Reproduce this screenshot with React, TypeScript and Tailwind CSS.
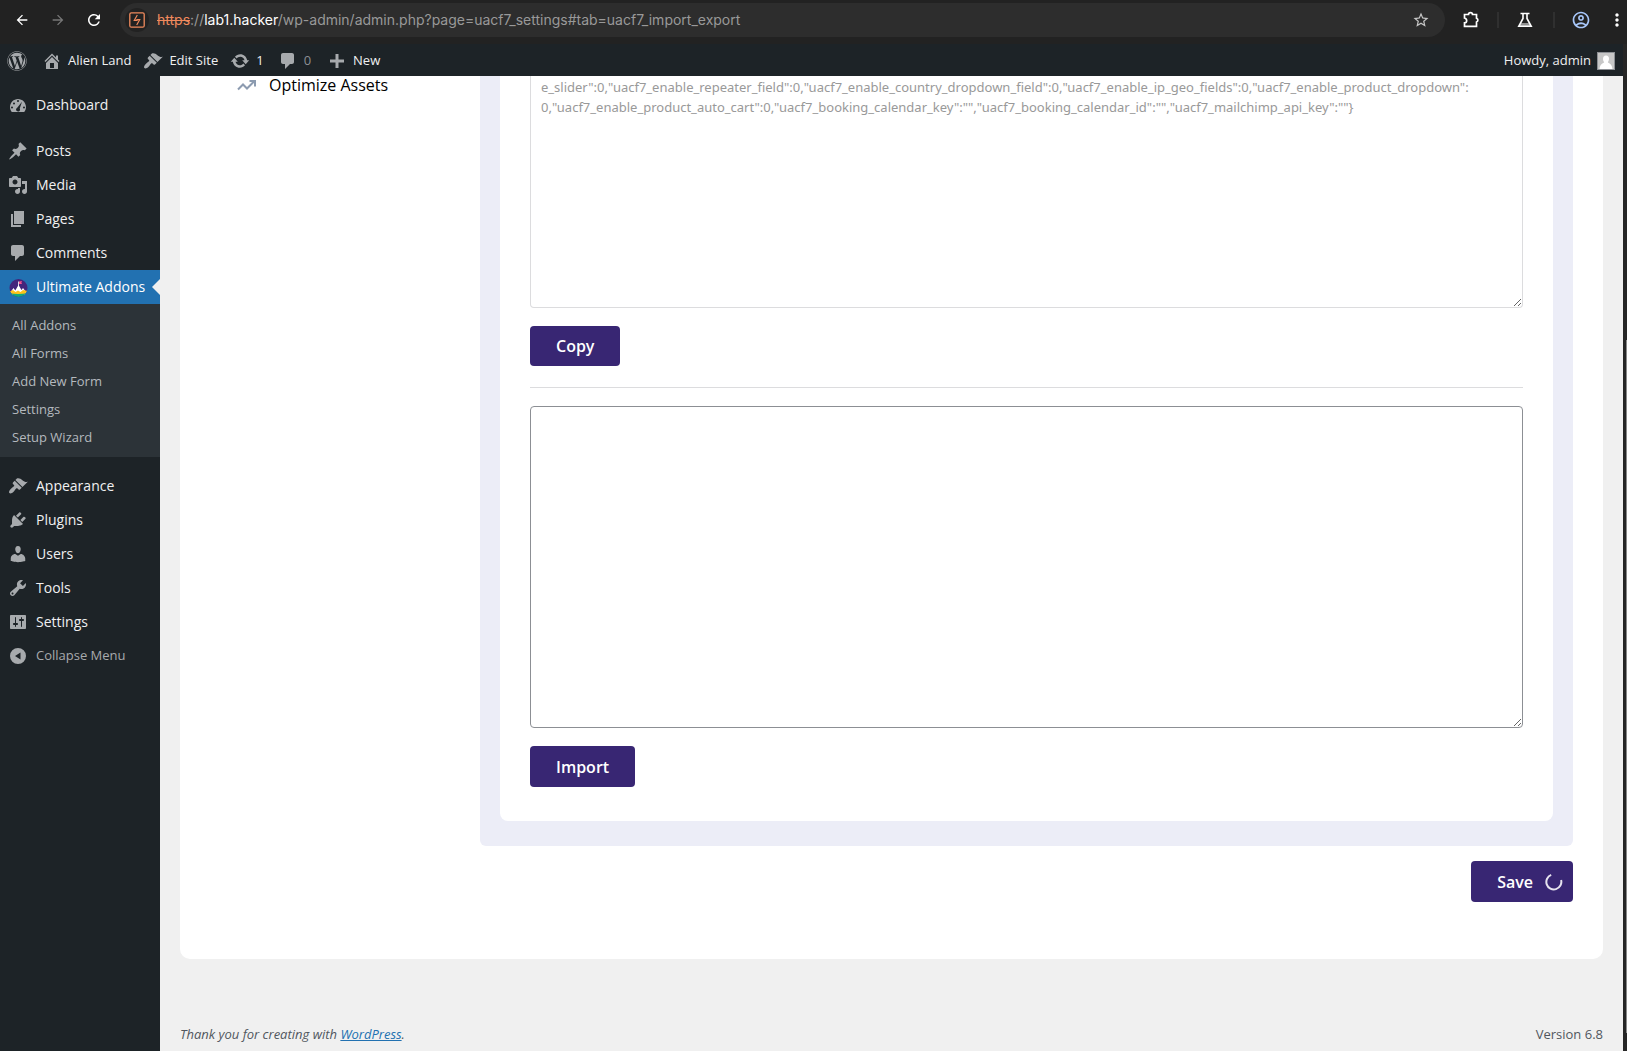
import type { ReactNode } from "react";
import { FaWordpress } from "react-icons/fa";
import { MdArrowBack, MdArrowForward, MdMoreVert, MdOutlineAccountCircle, MdRefresh, MdStarBorder } from "react-icons/md";

const paths = {
  dashboard:
    "M3.8 17h12.4C17.3 15.6 18 13.9 18 12c0-4.4-3.6-8-8-8s-8 3.6-8 8c0 1.900.700 3.600 1.800 5zM9 6a1 1 0 1 1 2 0 1 1 0 1 1-2 0zM5 8.500a1 1 0 1 1 2 0 1 1 0 1 1-2 0zM3 12.500a1 1 0 1 1 2 0 1 1 0 1 1-2 0zM15 12.500a1 1 0 1 1 2 0 1 1 0 1 1-2 0zM14 6.800l-2.300 6.800c.3.400.4.800.3 1.300a2 2 0 1 1-2.800-2.200z",
  post: "M10.44 3.02l1.82-1.82 6.36 6.35-1.83 1.82c-1.05-.68-2.48-.57-3.41.36l-.75.75c-.92.93-1.04 2.35-.35 3.41l-1.83 1.82-2.41-2.41-2.8 2.79c-.42.42-3.38 2.71-3.8 2.29s1.86-3.39 2.28-3.81l2.79-2.79L4.1 9.36l1.83-1.82c1.05.69 2.48.57 3.4-.36l.75-.75c.93-.92 1.05-2.35.36-3.41z",
  media:
    "M13 11V4c0-.55-.45-1-1-1h-1.67L9 1H5L3.67 3H2c-.55 0-1 .45-1 1v7c0 .55.45 1 1 1h10c.55 0 1-.45 1-1zM7 4.5c1.38 0 2.5 1.12 2.5 2.5S8.38 9.5 7 9.5 4.5 8.38 4.5 7 5.62 4.5 7 4.5zM14 6h5v10.5c0 1.38-1.12 2.5-2.5 2.5S14 17.88 14 16.5s1.12-2.5 2.5-2.5c.17 0 .34.02.5.05V9h-3V6zm-4 8.05V13h2v3.5c0 1.38-1.12 2.5-2.5 2.5S7 17.88 7 16.5 8.12 14 9.5 14c.17 0 .34.02.5.05z",
  page: "M6 15V2h10v13H6zm-1 1h8v2H3V5h2v11z",
  comment: "M5 2h9c1.1 0 2 .9 2 2v7c0 1.1-.9 2-2 2h-2l-5 5v-5H5c-1.1 0-2-.9-2-2V4c0-1.1.9-2 2-2z",
  brush:
    "M14.48 11.06L7.41 3.99l1.5-1.5c.5-.56 2.3-.47 3.51.32 1.21.8 1.43 1.28 2.91 2.1 1.18.64 2.45 1.26 4.45.85zm-.71.71L6.7 4.7 4.93 6.47c-.39.39-.39 1.02 0 1.41l1.06 1.06c.39.39.39 1.03 0 1.42-.6.6-1.43 1.11-2.21 1.69-.35.26-.7.53-1.01.84C1.43 14.23.4 16.08 1.4 17.07c.99 1 2.84-.03 4.18-1.36.31-.31.58-.66.85-1.02.57-.78 1.08-1.61 1.69-2.21.39-.39 1.02-.39 1.41 0l1.06 1.06c.39.39 1.02.39 1.41 0z",
  plug: "M13.11 4.36L9.87 7.6 8 5.73l3.24-3.24c.35-.34 1.05-.2 1.56.32.52.51.66 1.21.31 1.55zm-8 1.77l.91-1.12 9.01 9.01-1.19.84c-.71.71-2.63 1.16-3.82 1.16H6.14L4.9 17.26c-.59.59-1.54.59-2.12 0-.59-.58-.59-1.53 0-2.12l1.24-1.24v-3.88c0-1.13.4-3.19 1.09-3.89zm7.26 3.97l3.24-3.24c.34-.35 1.04-.21 1.55.31.52.51.66 1.21.31 1.55l-3.24 3.25z",
  user: "M10 9.25c-2.27 0-2.73-3.44-2.73-3.44C7 4.02 7.82 2 9.97 2c2.16 0 2.98 2.02 2.71 3.81 0 0-.41 3.44-2.68 3.44zm0 2.57L12.72 10c2.39 0 4.52 2.33 4.52 4.53v2.49s-3.65 1.13-7.24 1.13c-3.65 0-7.24-1.13-7.24-1.13v-2.49c0-2.25 1.94-4.48 4.47-4.48z",
  wrench:
    "M16.68 9.77c-1.34 1.34-3.3 1.67-4.95.99l-5.41 6.52c-.99.99-2.59.99-3.58 0s-.99-2.59 0-3.57l6.52-5.42c-.68-1.65-.35-3.61.99-4.95 1.28-1.28 3.12-1.62 4.72-1.06l-2.89 2.89 2.82 2.82 2.86-2.87c.53 1.58.18 3.39-1.08 4.65zM3.81 16.21c.4.39 1.04.39 1.43 0 .4-.4.4-1.04 0-1.43-.39-.4-1.03-.4-1.43 0-.39.39-.39 1.03 0 1.43z",
  sliders:
    "M18 16V4c0-.55-.45-1-1-1H3c-.55 0-1 .45-1 1v12c0 .55.45 1 1 1h14c.55 0 1-.45 1-1zM8 11h1c.55 0 1 .45 1 1s-.45 1-1 1H8v1.500c0 .28-.22.5-.5.5s-.5-.22-.5-.5V13H6c-.55 0-1-.45-1-1s.45-1 1-1h1V5.500c0-.28.22-.5.5-.5s.5.22.5.5V11zm5-2h-1c-.55 0-1-.45-1-1s.45-1 1-1h1V5.500c0-.28.22-.5.5-.5s.5.22.5.5V7h1c.55 0 1 .45 1 1s-.45 1-1 1h-1v5.500c0 .28-.22.5-.5.5s-.5-.22-.5-.5V9z",
  collapse: "M10 2a8 8 0 1 0 0 16 8 8 0 1 0 0-16zM12.500 6.500v7L7 10z",
  home: "M16 8.5l1.53 1.53-1.06 1.06L10 4.6l-6.47 6.49-1.06-1.06L10 2.5l4 4v-2h2v4zm-6-2.46l6 5.99V18H4v-5.97zM12 17v-5H8v5h4z",
  update:
    "M10.2 3.28c3.53 0 6.43 2.61 6.92 6h2.08l-3.5 4-3.5-4h2.32c-.45-1.97-2.21-3.45-4.32-3.45-1.45 0-2.73.71-3.54 1.78L4.95 5.66C6.23 4.2 8.11 3.28 10.2 3.28zm-.4 13.44c-3.52 0-6.43-2.61-6.92-6H.8l3.5-4c1.17 1.33 2.33 2.67 3.5 4H5.48c.45 1.97 2.21 3.45 4.32 3.45 1.45 0 2.73-.71 3.54-1.78l1.71 1.95c-1.28 1.46-3.15 2.38-5.25 2.38z",
  plus: "M17 8.500v3h-5.500V17h-3v-5.500H3v-3h5.500V3h3v5.500z",
};

type IconName = keyof typeof paths;

function Icon({ name, className = "size-5" }: { name: IconName; className?: string }) {
  return (
    <svg viewBox="0 0 20 20" fill="currentColor" fillRule="evenodd" className={`${className} shrink-0`} aria-hidden="true">
      <path d={paths[name]} />
    </svg>
  );
}

function AddonsLogo() {
  return (
    <svg viewBox="0 0 20 20" className="size-5 shrink-0" aria-hidden="true">
      <clipPath id="disc">
        <circle cx="10.500" cy="11" r="9" />
      </clipPath>
      <g clipPath="url(#disc)">
        <rect width="20" height="20" fill="#43257c" />
        <path d="M10.200 9V4.500h.8V9z" fill="#fff" />
        <path d="M11 4.500l3-.6-.6 1.600.6 1.500h-3z" fill="#f0508c" />
        <path d="M3 14.500L5.500 11l1.800 2.500L10.500 8l3 5 1.500-2L18 15v1H3z" fill="#fff" />
        <path d="M0 14l3 0 2-1 2.500 2 2.500-1.500 2.500 1.500 2.500-2 5 1v4H0z" fill="#ffc21a" />
        <path d="M0 16q10 2 20 0V20H0z" fill="#12a87f" />
      </g>
    </svg>
  );
}

function BrowserBar() {
  return (
    <header className="flex h-11 shrink-0 items-center bg-[#222222] pb-1 text-white">
      <button aria-label="Back" className="ml-3 flex size-5 items-center justify-center">
        <MdArrowBack className="size-4" />
      </button>
      <button aria-label="Forward" className="ml-4 flex size-5 items-center justify-center text-[#777777]">
        <MdArrowForward className="size-4" />
      </button>
      <button aria-label="Reload" className="ml-4 flex size-5 items-center justify-center">
        <MdRefresh className="size-[18px]" />
      </button>
      <div className="ml-4 flex h-[34px] min-w-0 flex-1 items-center rounded-full bg-[#2d2d2d] pr-[15px] pl-[5px]">
        <span className="flex size-6 shrink-0 items-center justify-center rounded-full bg-[#222222]">
          <svg viewBox="0 0 16 16" className="size-4" aria-hidden="true" fill="none" stroke="#f08a5d">
            <rect x="0.800" y="0.800" width="14.400" height="14.400" rx="1.500" strokeWidth="1.300" />
            <path d="M8.300 3L5.300 8.300H8V7M7.700 13l3-5.300H8V9" strokeWidth="1.200" />
          </svg>
        </span>
        <p className="ml-2 flex-1 truncate font-['Inter',sans-serif] text-sm text-[#999999]">
          <span className="text-[#f08a5d] line-through">https</span>://<span className="text-white">lab1.hacker</span>
          /wp-admin/admin.php?page=uacf7_settings#tab=uacf7_import_export
        </p>
        <button aria-label="Bookmark" className="text-[#c7c7c7]">
          <MdStarBorder className="size-[18px]" />
        </button>
      </div>
      <button aria-label="Extensions" className="ml-4">
        <svg viewBox="0 0 20 20" className="size-5" fill="none" stroke="currentColor" strokeWidth="1.700" aria-hidden="true">
          <path d="M3.500 8V4.500h4a2 1.800 0 0 1 4 0h4v3.700a2 2 0 0 1 0 3.800v4.300H3.500v-3.500c2.800 0 3-4 0-4.800z" />
        </svg>
      </button>
      <span className="ml-4 h-4 w-0.5 bg-[#303030]" />
      <button aria-label="Labs" className="ml-4">
        <svg viewBox="0 0 20 20" className="size-5" fill="none" stroke="currentColor" strokeWidth="1.600" aria-hidden="true">
          <path d="M5.500 3.500h9M8 3.500v5L3.800 16.300h12.400L12 8.500v-5" />
          <path d="M6 13h8l2 3.300H4z" fill="currentColor" stroke="none" opacity="0.500" />
        </svg>
      </button>
      <span className="ml-[18px] h-4 w-0.5 bg-[#303030]" />
      <button aria-label="Profile" className="ml-4 text-[#a8c7fa]">
        <MdOutlineAccountCircle className="size-5" />
      </button>
      <button aria-label="Menu" className="ml-4">
        <MdMoreVert className="size-5" />
      </button>
    </header>
  );
}

function BarLink({ icon, children, className = "ml-3" }: { icon: IconName; children: ReactNode; className?: string }) {
  return (
    <a href="#" className={`flex items-center gap-1.5 ${className}`}>
      <Icon name={icon} className="size-5 text-[#a7aaad]" />
      {children}
    </a>
  );
}

function AdminBar() {
  return (
    <nav className="flex h-8 shrink-0 items-center bg-[#1d2327] pt-0.5 pr-2 pl-[7px] text-[13px] text-[#f0f0f1]">
      <a href="#" aria-label="About WordPress" className="text-[#a7aaad]">
        <FaWordpress className="size-5" />
      </a>
      <BarLink icon="home" className="ml-[15px]">Alien Land</BarLink>
      <BarLink icon="brush">Edit Site</BarLink>
      <BarLink icon="update">1</BarLink>
      <BarLink icon="comment" className="ml-3.5 text-[#8c8f94]">0</BarLink>
      <BarLink icon="plus" className="ml-4">New</BarLink>
      <a href="#" className="ml-auto flex items-center gap-1.5">
        Howdy, admin
        <svg viewBox="0 0 18 18" className="size-[18px]" aria-hidden="true">
          <rect width="18" height="18" fill="#c7c7c7" />
          <path d="M9 3.500c2 0 3.200 1.500 3 3.500s-.8 2.500-1.200 3.300c1 1.200 4 1.200 4.700 6.700h-13c.7-5.500 3.700-5.500 4.700-6.700C6.800 9.500 6 9 6 7s1-3.500 3-3.500z" fill="#fff" />
          <rect x="0.500" y="0.500" width="17" height="17" fill="none" stroke="#8c8f94" />
        </svg>
      </a>
    </nav>
  );
}

function MenuItem({ icon, label }: { icon: IconName; label: string }) {
  return (
    <a href="#" className="flex h-[34px] items-center gap-2 pl-2 text-sm text-[#f0f0f1]">
      <Icon name={icon} className="size-5 text-[#a7aaad]" />
      {label}
    </a>
  );
}

const submenu = ["All Addons", "All Forms", "Add New Form", "Settings", "Setup Wizard"];

function Sidebar() {
  return (
    <nav className="w-40 shrink-0 bg-[#1d2327] pt-3">
      <MenuItem icon="dashboard" label="Dashboard" />
      <div className="h-3" />
      <MenuItem icon="post" label="Posts" />
      <MenuItem icon="media" label="Media" />
      <MenuItem icon="page" label="Pages" />
      <MenuItem icon="comment" label="Comments" />
      <a href="#" className="relative flex h-[34px] items-center gap-2 bg-[#2271b1] pl-2 text-sm text-white">
        <AddonsLogo />
        Ultimate Addons
        <span className="absolute top-1/2 right-0 -mt-2 border-8 border-l-0 border-transparent border-r-[#f0f0f0]" />
      </a>
      <ul className="bg-[#2c3338] pt-2 pb-[5px] pl-3 text-[13px] text-[#b4b9be]">
        {submenu.map((label) => (
          <li key={label}>
            <a href="#" className="flex h-7 items-center">{label}</a>
          </li>
        ))}
      </ul>
      <div className="h-3" />
      <MenuItem icon="brush" label="Appearance" />
      <MenuItem icon="plug" label="Plugins" />
      <MenuItem icon="user" label="Users" />
      <MenuItem icon="wrench" label="Tools" />
      <MenuItem icon="sliders" label="Settings" />
      <button className="flex h-[34px] items-center gap-2 pl-2 text-[13px] text-[#a7aaad]">
        <Icon name="collapse" />
        Collapse Menu
      </button>
    </nav>
  );
}

const exported =
  'e_slider":0,"uacf7_enable_repeater_field":0,"uacf7_enable_country_dropdown_field":0,"uacf7_enable_ip_geo_fields":0,"uacf7_enable_product_dropdown":\n0,"uacf7_enable_product_auto_cart":0,"uacf7_booking_calendar_key":"","uacf7_booking_calendar_id":"","uacf7_mailchimp_api_key":""}';

const button = "flex items-center rounded bg-[#382673] text-base font-semibold text-white";

function Settings() {
  return (
    <section className="rounded-b-[10px] bg-white pr-[30px] pb-[57px]">
      <div className="flex">
        <div className="w-[300px] shrink-0">
          <a href="#" className="ml-[57px] flex h-[18px] items-center gap-3 text-base leading-[18px] text-black">
            <svg viewBox="0 0 20 12" className="h-3 w-5" fill="none" stroke="#8c9bb0" strokeWidth="2" aria-hidden="true">
              <path d="M1 10.500L6 5.500l4 4 7.500-7.500M12.500 2H18v5.500" />
            </svg>
            Optimize Assets
          </a>
        </div>
        <div className="min-w-0 flex-1 rounded-b-md bg-[#ecedf7] px-5 pb-[25px]">
          <div className="rounded-b-lg bg-white px-[30px] pb-[34px]">
            <textarea
              aria-label="Export settings"
              disabled
              defaultValue={exported}
              className="block h-[232px] w-full resize-y rounded-b border border-t-0 border-[#dcdcde] px-2.5 pt-px font-['Noto_Sans',sans-serif] text-[13px] leading-5 break-all text-[#999999]"
            />
            <button className={`${button} mt-[18px] h-10 px-[26px]`}>Copy</button>
            <hr className="mt-[21px] border-[#dcdcde]" />
            <textarea
              aria-label="Import settings"
              className="mt-[18px] block h-[322px] w-full resize-y rounded border border-[#8c8f94] px-2.5 py-1 text-sm leading-5"
            />
            <button className={`${button} mt-[18px] h-[41px] px-[26px]`}>Import</button>
          </div>
        </div>
      </div>
      <button className={`${button} mt-[15px] ml-auto h-[41px] gap-3 pr-2.5 pl-[26px]`}>
        Save
        <svg viewBox="0 0 18 18" className="size-[18px]" fill="none" stroke="#e6e3ef" strokeWidth="2" aria-hidden="true">
          <path d="M6.200 1.900A7.500 7.500 0 1 0 16.100 7" />
        </svg>
      </button>
    </section>
  );
}

export default function App() {
  return (
    <div className="flex h-screen flex-col overflow-hidden bg-[#262626] font-['Open_Sans',sans-serif]">
      <BrowserBar />
      <div className="flex min-h-0 flex-1">
        <div className="flex min-w-0 flex-1 flex-col">
          <AdminBar />
          <div className="flex min-h-0 flex-1">
            <Sidebar />
            <main className="flex min-w-0 flex-1 flex-col bg-[#f0f0f0] px-5">
              <Settings />
              <footer className="mt-auto flex justify-between pb-[7px] text-[13px] leading-5 text-[#50575e]">
                <p className="italic">
                  Thank you for creating with <a href="#" className="text-[#2271b1] underline">WordPress</a>.
                </p>
                <p>Version 6.8</p>
              </footer>
            </main>
          </div>
        </div>
        <div className="flex w-1 shrink-0 justify-end bg-[#262626] pt-[296px] pb-[18px]">
          <div className="w-px bg-[#8a8a8a]" />
        </div>
      </div>
    </div>
  );
}
